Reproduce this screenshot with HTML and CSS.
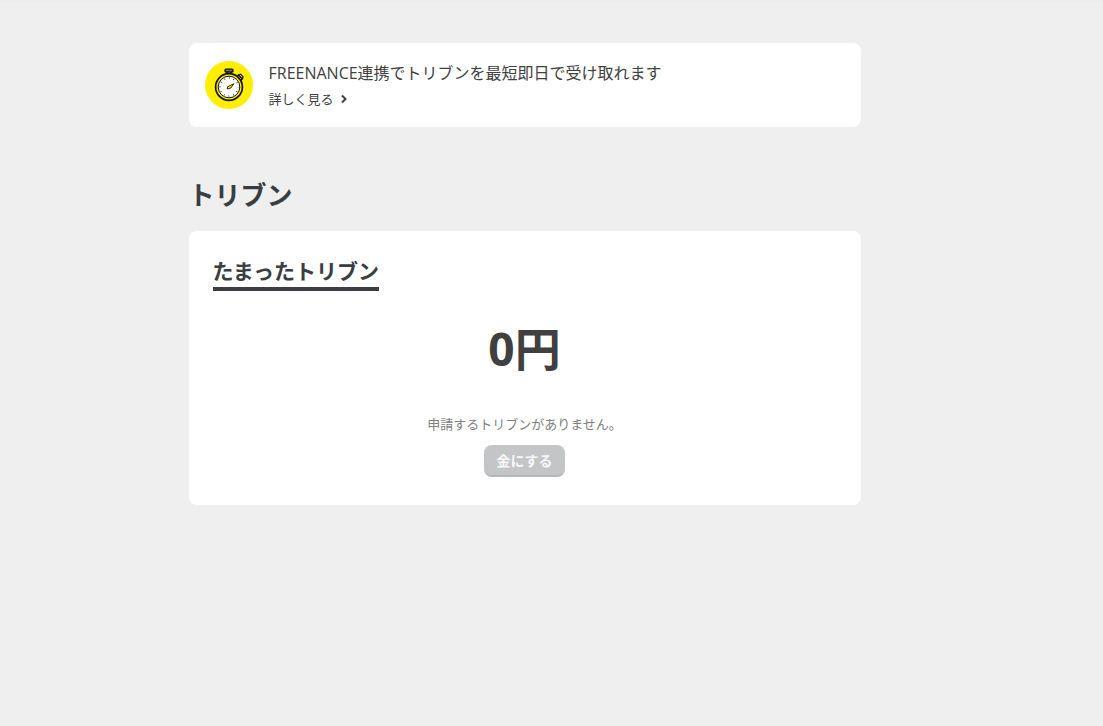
FILE: index.html
```html
<!DOCTYPE html>
<html lang="ja">
<head>
  <meta charset="UTF-8" />
  <meta name="viewport" content="width=device-width, initial-scale=1.0"/>
  <title>トリブン</title>
  <link rel="stylesheet" href="styles.css">
</head>
<body>
  <main class="container">
    <section class="card notice">
      <svg class="notice-icon" viewBox="0 0 48 48" aria-hidden="true">
        <circle cx="24" cy="24" r="24" fill="#ffee00"/>
        <g stroke="#111" stroke-linejoin="round">
          <path d="M22 10h4v4h-4z" fill="#fff" stroke-width="1.2"/>
          <rect x="20" y="8.2" width="8" height="2.8" rx="1" fill="#777" stroke-width="1.3"/>
          <path d="M32 15.5l1.6-1.8 4 4-1.6 1.8z" fill="#ffee00" stroke-width="1.2"/>
          <path d="M33.5 14l2-.8 2.6 2.6-.8 2z" fill="#ddd" stroke-width="1.2"/>
          <circle cx="24" cy="26" r="13.4" fill="#ffee00" stroke-width="1.7"/>
          <circle cx="24" cy="26" r="10.8" fill="#fff" stroke-width="1"/>
        </g>
        <circle cx="24" cy="26" r="9" fill="none" stroke="#222" stroke-width="1.6" stroke-dasharray=".7 4.012" stroke-dashoffset=".35"/>
        <path d="M28.8 22.8l-3 4.2-3.5 1 .2-2.2z" fill="#ffee00" stroke="#111" stroke-width=".9" stroke-linejoin="round"/>
      </svg>
      <div class="notice-body">
        <p class="notice-title">FREENANCE連携でトリブンを最短即日で受け取れます</p>
        <a class="notice-link" href="#">詳しく見る
          <svg class="chevron" viewBox="0 0 6 10" aria-hidden="true"><path d="M1 1.5L4.5 5 1 8.5" fill="none" stroke="currentColor" stroke-width="2"/></svg>
        </a>
      </div>
    </section>

    <h1 class="page-title">トリブン</h1>

    <section class="card balance">
      <h2 class="balance-title">たまったトリブン</h2>
      <p class="amount">0円</p>
      <p class="message">申請するトリブンがありません。</p>
      <button class="cash-button" type="button" disabled>金にする</button>
    </section>
  </main>
</body>
</html>
```

FILE: styles.css
```css
* {
  box-sizing: border-box;
}

body {
  margin: 0;
  padding: 43px 70px 40px 16px;
  background: #efefef linear-gradient(#ececec, #efefef) no-repeat;
  background-size: 100% 4px;
  color: #3c4043;
  font-family: "Open Sans", "Noto Sans CJK JP", sans-serif;
}

h1, h2, p {
  margin: 0;
}

.container {
  max-width: 672px;
  margin: 0 auto;
}

.card {
  background: #fff;
  border-radius: 8px;
}

.notice {
  display: flex;
  align-items: center;
  gap: 16px;
  padding: 16px;
}

.notice-icon {
  flex: none;
  width: 48px;
  height: 48px;
}

.notice-title {
  font-size: 16px;
  line-height: 28px;
  color: #404040;
}

.notice-link {
  display: flex;
  align-items: center;
  gap: 7px;
  font-size: 13px;
  line-height: 24px;
  color: #404040;
  text-decoration: none;
}

.chevron {
  width: 6px;
  height: 10px;
}

.page-title {
  margin: 48px 0 16px;
  font-size: 26px;
  line-height: 40px;
  color: #3a3d42;
}

.balance {
  display: flex;
  flex-direction: column;
  align-items: center;
  padding: 24px 24px 28px;
}

.balance-title {
  align-self: flex-start;
  border-bottom: 4px solid #3c3e44;
  font-size: 21px;
  line-height: 32px;
  color: #3a3d42;
}

.amount {
  margin: 24px 0 30px;
  font-size: 46px;
  font-weight: bold;
  line-height: 66px;
  color: #404040;
}

.message {
  margin-bottom: 8px;
  font-size: 13px;
  line-height: 26px;
  color: #808080;
}

.cash-button {
  height: 32px;
  padding: 1px 12px 0;
  border: none;
  border-bottom: 2px solid #b5b6b8;
  border-radius: 8px;
  background: #c4c5c7;
  color: #f8f8f8;
  font-family: inherit;
  font-size: 14px;
  font-weight: bold;
  line-height: 29px;
}
```
